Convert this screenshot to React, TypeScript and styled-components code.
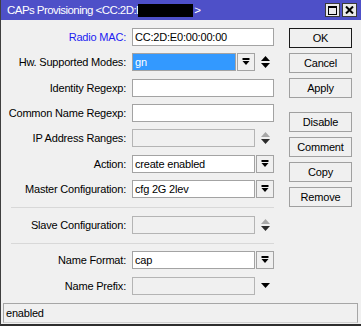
import React from 'react';
import styled, {createGlobalStyle} from 'styled-components';

const GlobalStyle = createGlobalStyle`
  html, body {
    margin: 0;
    padding: 0;
    background: #ffffff;
    overflow: hidden;
  }
  body {
    font-family: "Liberation Sans", Arial, sans-serif;
    font-size: 11px;
    letter-spacing: -0.2px;
    color: #000;
  }
`;

const Window = styled.div`
  width: 361px;
  height: 326px;
  box-sizing: border-box;
  background: #f0f0f0;
  border-left: 1px solid #3f3f3f;
  border-bottom: 2px solid #2e2e2e;
  display: flex;
  flex-direction: column;
`;

const TitleBar = styled.div`
  height: 20px;
  background: #4e50c8;
  color: #ffffff;
  display: flex;
  align-items: center;
  padding-left: 6px;
  padding-right: 4px;
  font-size: 11.5px;
  letter-spacing: -0.55px;
`;

const TitleText = styled.span`
  flex: 1;
  display: flex;
  align-items: center;
  white-space: nowrap;
`;

const Redacted = styled.span`
  display: inline-block;
  width: 55px;
  height: 13px;
  background: #000;
  margin-left: -5px;
  margin-right: 1px;
`;

const TitleButton = styled.div`
  width: 15px;
  height: 14px;
  box-sizing: border-box;
  border: 1px solid #3a3a3a;
  background: #e9e9e9;
  margin-left: 2px;
  display: flex;
  align-items: center;
  justify-content: center;
`;

const Main = styled.div`
  display: flex;
  flex: 1;
`;

const Form = styled.div`
  width: 288px;
  padding-top: 8px;
  display: flex;
  flex-direction: column;
`;

const Group = styled.div<{$gap: number}>`
  display: flex;
  flex-direction: column;
  gap: ${p => p.$gap}px;
`;

const Row = styled.div`
  display: grid;
  grid-template-columns: 125px 142px;
  column-gap: 6px;
  align-items: center;
  height: 18px;
`;

const Label = styled.span<{$accent?: boolean}>`
  text-align: right;
  white-space: nowrap;
  color: ${p => (p.$accent ? '#1c1cf2' : '#000')};
`;

const Field = styled.div`
  display: flex;
  align-items: center;
  gap: 1px;
  height: 18px;
`;

const Input = styled.div<{$w: number; $disabled?: boolean; $selected?: boolean}>`
  width: ${p => p.$w}px;
  height: 18px;
  box-sizing: border-box;
  border: 1px solid ${p => (p.$disabled ? '#b4b4b4' : '#a3a3a3')};
  background: ${p => (p.$selected ? '#3399ff' : p.$disabled ? '#f0f0f0' : '#ffffff')};
  color: ${p => (p.$selected ? '#ffffff' : '#000')};
  padding-left: 2px;
  line-height: 16px;
  white-space: nowrap;
  overflow: hidden;
`;

const DropButton = styled.div`
  width: 18px;
  height: 18px;
  box-sizing: border-box;
  border: 1px solid #a3a3a3;
  background: #f0f0f0;
  display: flex;
  align-items: center;
  justify-content: center;
`;

const ArrowCell = styled.div`
  width: 18px;
  height: 18px;
  display: flex;
  align-items: center;
  justify-content: center;
`;

const Separator = styled.div<{$top: number; $bottom: number}>`
  height: 1px;
  width: 263px;
  background: #d8d8d8;
  margin: ${p => p.$top}px 0 ${p => p.$bottom}px 10px;
`;

const Buttons = styled.div`
  padding-top: 8px;
  display: flex;
  flex-direction: column;
  gap: 5px;
`;

const Button = styled.div<{$primary?: boolean; $spaced?: boolean}>`
  width: 63px;
  height: 20px;
  box-sizing: border-box;
  border: 1px solid ${p => (p.$primary ? '#1a1a1a' : '#a0a0a0')};
  background: #f0f0f0;
  display: flex;
  align-items: center;
  justify-content: center;
  margin-top: ${p => (p.$spaced ? 9 : 0)}px;
`;

const StatusBar = styled.div`
  margin: 0 0 1px 2px;
  width: 355px;
  height: 20px;
  box-sizing: border-box;
  border: 1px solid #a6a6a6;
  border-bottom-color: #d0d0d0;
  padding-left: 2px;
  line-height: 18px;
`;

const DropIcon = () => (
  <svg width="8" height="8" viewBox="0 0 8 8">
    <rect x="0.5" y="0" width="7" height="2" fill="#000" />
    <polygon points="0.5,3 7.5,3 4,7" fill="#000" />
  </svg>
);

const UpDownIcon = ({muted}: {muted?: boolean}) => (
  <svg width="9" height="12" viewBox="0 0 9 12">
    <polygon points="4.5,0 9,5 0,5" fill={muted ? '#a8a8a8' : '#000'} />
    <polygon points="0,7 9,7 4.5,12" fill={muted ? '#2b2b2b' : '#000'} />
  </svg>
);

const DownIcon = () => (
  <svg width="9" height="5" viewBox="0 0 9 5">
    <polygon points="0,0 9,0 4.5,5" fill="#000" />
  </svg>
);

const MaxIcon = () => (
  <svg width="9" height="9" viewBox="0 0 9 9">
    <rect x="0.5" y="0.5" width="8" height="8" fill="none" stroke="#000" />
    <rect x="0" y="0" width="9" height="2" fill="#000" />
  </svg>
);

const CloseIcon = () => (
  <svg width="9" height="8" viewBox="0 0 9 8">
    <path d="M1 0.5 L8 7.5 M8 0.5 L1 7.5" stroke="#000" strokeWidth="2" />
  </svg>
);

const App: React.FC = () => {
  return (
    <>
      <GlobalStyle />
      <Window>
        <TitleBar>
          <TitleText>
            CAPs Provisioning &lt;CC:2D:E<Redacted />&gt;
          </TitleText>
          <TitleButton><MaxIcon /></TitleButton>
          <TitleButton><CloseIcon /></TitleButton>
        </TitleBar>
        <Main>
          <Form>
            <Group $gap={7.34}>
              <Row>
                <Label $accent>Radio MAC:</Label>
                <Input $w={142}>CC:2D:E0:00:00:00</Input>
              </Row>
              <Row>
                <Label>Hw. Supported Modes:</Label>
                <Field>
                  <Input $w={105} $selected>gn</Input>
                  <DropButton><DropIcon /></DropButton>
                  <ArrowCell><UpDownIcon /></ArrowCell>
                </Field>
              </Row>
              <Row>
                <Label>Identity Regexp:</Label>
                <Input $w={142} />
              </Row>
              <Row>
                <Label>Common Name Regexp:</Label>
                <Input $w={142} />
              </Row>
              <Row>
                <Label>IP Address Ranges:</Label>
                <Field>
                  <Input $w={124} $disabled />
                  <ArrowCell><UpDownIcon muted /></ArrowCell>
                </Field>
              </Row>
              <Row>
                <Label>Action:</Label>
                <Field>
                  <Input $w={123}>create enabled</Input>
                  <DropButton><DropIcon /></DropButton>
                </Field>
              </Row>
              <Row>
                <Label>Master Configuration:</Label>
                <Field>
                  <Input $w={123}>cfg 2G 2lev</Input>
                  <DropButton><DropIcon /></DropButton>
                </Field>
              </Row>
            </Group>
            <Separator $top={9} $bottom={8} />
            <Row>
              <Label>Slave Configuration:</Label>
              <Field>
                <Input $w={124} $disabled />
                <ArrowCell><UpDownIcon muted /></ArrowCell>
              </Field>
            </Row>
            <Separator $top={9} $bottom={7} />
            <Group $gap={8}>
              <Row>
                <Label>Name Format:</Label>
                <Field>
                  <Input $w={123}>cap</Input>
                  <DropButton><DropIcon /></DropButton>
                </Field>
              </Row>
              <Row>
                <Label>Name Prefix:</Label>
                <Field>
                  <Input $w={124} $disabled />
                  <ArrowCell><DownIcon /></ArrowCell>
                </Field>
              </Row>
            </Group>
          </Form>
          <Buttons>
            <Button $primary>OK</Button>
            <Button>Cancel</Button>
            <Button>Apply</Button>
            <Button $spaced>Disable</Button>
            <Button>Comment</Button>
            <Button>Copy</Button>
            <Button>Remove</Button>
          </Buttons>
        </Main>
        <StatusBar>enabled</StatusBar>
      </Window>
    </>
  );
};

export default App;
